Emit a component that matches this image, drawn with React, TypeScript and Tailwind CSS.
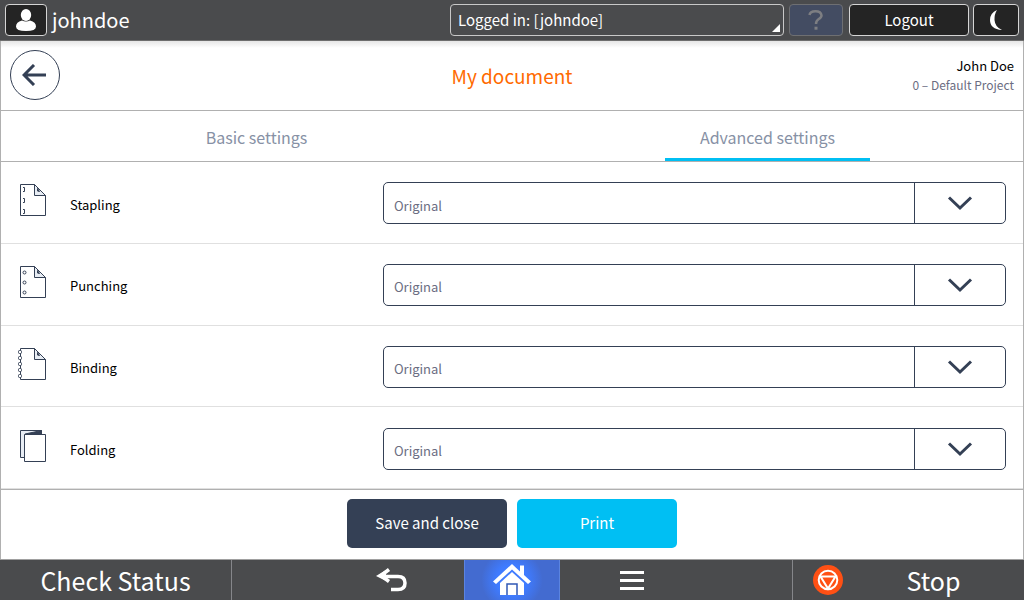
import { useState } from 'react';
import type { ReactNode } from 'react';

const PageOutline = () => (
    <>
        <path d="M3.5 1.5H17.5l11 11V32.5H3.5Z" fill="#fff" />
        <path d="M17.5 1.5V12.5H28.5Z" fill="#e8edf4" />
        <path d="M20.5 5.5v2.500l2 .5z" fill="#344055" />
    </>
);

const StaplingIcon = () => (
    <svg width="32" height="34" viewBox="0 0 32 34" fill="none" stroke="#344055" aria-hidden="true">
        <PageOutline />
        <path d="M6 4.500h1.500v4H6M6 15.500h1.500v4H6M6 26.500h1.500v4H6" strokeLinejoin="round" />
    </svg>
);

const PunchingIcon = () => (
    <svg width="32" height="34" viewBox="0 0 32 34" fill="none" stroke="#344055" aria-hidden="true">
        <PageOutline />
        <circle cx="7.5" cy="7.5" r="1.5" />
        <circle cx="7.5" cy="17.5" r="1.5" />
        <circle cx="7.5" cy="27.5" r="1.5" />
    </svg>
);

const BindingIcon = () => (
    <svg width="32" height="34" viewBox="0 0 32 34" fill="none" stroke="#344055" aria-hidden="true">
        <PageOutline />
        {[3.5, 9.5, 15.5, 21.5, 27.5].map((y) => (
            <rect key={y} x="1.5" y={y} width="3" height="3" rx="1" fill="#fff" />
        ))}
    </svg>
);

const FoldingIcon = () => (
    <svg width="32" height="34" viewBox="0 0 32 34" fill="none" stroke="#344055" aria-hidden="true">
        <path d="M3.5 1.5H24.5V28.5H3.5Z" fill="#e8edf4" />
        <path d="M8 5 24.5 1.5V5.5H8Z" fill="#344055" />
        <path d="M7.5 5.5H28.5V32.5H7.5Z" fill="#fff" />
    </svg>
);

const settings: { id: string; label: string; icon: ReactNode }[] = [
    { id: 'stapling', label: 'Stapling', icon: <StaplingIcon /> },
    { id: 'punching', label: 'Punching', icon: <PunchingIcon /> },
    { id: 'binding', label: 'Binding', icon: <BindingIcon /> },
    { id: 'folding', label: 'Folding', icon: <FoldingIcon /> }
];

const tabs = ['Basic settings', 'Advanced settings'];

const TopBar = () => (
    <header className="flex h-[41px] items-center bg-[#4a4b4d] px-[5px] text-white border-b border-[#6e6e6e]">
        <button aria-label="User" className="flex h-8 w-[42px] items-center justify-center rounded border border-[#d5d5d5] bg-[#242424]">
            <svg width="20" height="22" viewBox="0 0 20 22" fill="#fff" aria-hidden="true">
                <ellipse cx="10" cy="6" rx="5.2" ry="6" />
                <path d="M6 11.5q4 2 8 0 6 1.500 6 6 0 4.500-10 4.500T0 17.500Q0 13 6 11.500Z" />
            </svg>
        </button>
        <span className="ml-[5px] flex-1 text-xl leading-8">johndoe</span>
        <div className="relative mr-[5px] w-[334px]">
            <select aria-label="Session" className="h-8 w-full appearance-none rounded border border-[#c8c8c8] bg-transparent px-[7px] text-[15px] text-white">
                <option>Logged in: [johndoe]</option>
            </select>
            <svg className="pointer-events-none absolute right-1 bottom-1" width="8" height="8" viewBox="0 0 8 8" fill="#fff" aria-hidden="true">
                <path d="M8 0V8H0Z" />
            </svg>
        </div>
        <button aria-label="Help" disabled className="mr-[6px] flex h-8 w-[54px] items-center justify-center rounded border border-[#6e6f72] bg-[#434c62]">
            <svg width="16" height="20" viewBox="0 0 16 20" fill="none" stroke="#7d7e82" strokeWidth="2.500" aria-hidden="true">
                <path d="M1.500 5Q2 1.300 7.500 1.300T13.500 5.500Q13.500 7.500 10.500 9.300 8 11 8 14" />
                <path d="M6.500 18.200H9.500" strokeWidth="3" />
            </svg>
        </button>
        <button className="mr-1 h-8 w-[120px] rounded border border-[#d5d5d5] bg-[#242424] text-[15px]">Logout</button>
        <button aria-label="Sleep" className="flex h-8 w-[46px] items-center justify-center rounded border border-[#d5d5d5] bg-[#242424]">
            <svg width="14" height="20" viewBox="0 0 14 20" fill="#fff" aria-hidden="true">
                <path d="M8 0Q1 3 1 10 1 19 13 20 6 17 5.500 10 5.300 4 8 0Z" />
            </svg>
        </button>
    </header>
);

const TitleBar = () => (
    <div className="grid h-[70px] grid-cols-[1fr_auto_1fr] items-center border-b border-[#b0b0b0] bg-linear-to-b from-[#e6e6e6] via-white via-10% to-white px-[9px] pb-0.5">
        <button aria-label="Back" className="flex size-[50px] items-center justify-center rounded-full border border-[#344055]">
            <svg width="26" height="22" viewBox="0 0 26 22" fill="none" stroke="#344055" strokeWidth="3" aria-hidden="true">
                <path d="M24 11H2M12 1 2 11 12 21" />
            </svg>
        </button>
        <h1 className="pt-1 text-[19px] text-[#ff6a00]">My document</h1>
        <div className="text-right">
            <p className="text-[13px] leading-5 text-black">John Doe</p>
            <p className="text-[12px] leading-[18px] text-[#6b6d82]">0 – Default Project</p>
        </div>
    </div>
);

const SettingRow = ({ id, label, icon }: { id: string; label: string; icon: ReactNode }) => (
    <div className="flex min-h-20 flex-1 items-center border-b border-[#e0e0e0] pt-0.5 pr-[17px] pl-4">
        <div className="-mt-1.5">{icon}</div>
        <label htmlFor={id} className="ml-[21px] flex-1 pt-0.5 text-[13px] text-black">{label}</label>
        <div className="relative w-[63%]">
            <select id={id} className="h-[42px] w-full appearance-none rounded-[5px] border border-[#344055] bg-white px-2.5 pt-1 text-[13px] text-[#6b6d82]">
                <option>Original</option>
            </select>
            <span className="pointer-events-none absolute inset-y-0 right-0 flex w-[92px] items-center justify-center border-l border-[#344055] pr-0.5">
                <svg width="26" height="16" viewBox="0 0 26 16" fill="none" stroke="#344055" strokeWidth="3" aria-hidden="true">
                    <path d="M2 2.500 13 13 24 2.500" />
                </svg>
            </span>
        </div>
    </div>
);

const BottomNav = () => (
    <nav className="flex h-[41px] border-t border-[#a0a0a0] bg-[#4a4b4d] text-white">
        <button className="w-[232px] border-r border-[#85868a] text-[25px] leading-10">Check Status</button>
        <div className="flex flex-1 justify-center gap-6">
            <button aria-label="Back" className="flex w-24 items-center justify-center">
                <svg width="32" height="24" viewBox="0 0 32 24" fill="none" stroke="#fff" strokeWidth="3.500" aria-hidden="true">
                    <path d="M8 8.500H22Q29 8.500 29 15T22 21.500H15" />
                    <path d="M13 1.500 5 7.500 13 13.500" />
                    <path d="M0 8 10 2V13Z" fill="#fff" stroke="none" />
                </svg>
            </button>
            <button aria-label="Home" className="flex w-24 items-center justify-center border-x border-[#5b84e0] bg-radial-[circle] from-[#3f7bff] from-30% to-[#436bd0] to-60%">
                <svg width="38" height="32" viewBox="0 0 38 32" fill="#fff" aria-hidden="true">
                    <path d="M19 0 27 7.500V1.500H31V11L38 17.500 35 20 19 5.500 3 20 0 17.500Z" />
                    <path d="M19 8 31 19V31H7V19Z" />
                    <path d="M14 31V20H24V31" fill="none" stroke="#3158b5" strokeWidth="1.500" />
                </svg>
            </button>
            <button aria-label="Menu" className="flex w-24 items-center justify-center">
                <svg width="24" height="20" viewBox="0 0 24 20" fill="#fff" aria-hidden="true">
                    <path d="M0 1H24V4H0ZM0 9H24V12H0ZM0 17H24V20H0Z" />
                </svg>
            </button>
        </div>
        <button className="flex w-[232px] items-center border-l border-[#85868a] pl-5 text-[25px] leading-10">
            <svg width="30" height="30" viewBox="0 0 30 30" fill="none" stroke="#fff" strokeWidth="2" aria-hidden="true">
                <circle cx="15" cy="15" r="15" fill="#ff5014" stroke="none" />
                <circle cx="15" cy="15" r="9.300" />
                <path d="M7.500 11.500H22.500L15 23.500Z" />
            </svg>
            <span className="flex-1 text-center">Stop</span>
        </button>
    </nav>
);

export default function App() {
    const [activeTab, setActiveTab] = useState(1);

    return (
        <div className="flex min-h-screen flex-col bg-white font-['Noto_Sans_CJK_JP','Noto_Sans',sans-serif]">
            <TopBar />
            <main className="flex flex-1 flex-col border-x border-[#b0b0b0]">
                <TitleBar />
                <div role="tablist" className="grid h-[51px] grid-cols-2 border-b border-[#b0b0b0]">
                    {tabs.map((tab, idx) => (
                        <button key={tab} role="tab" aria-selected={idx === activeTab} onClick={() => setActiveTab(idx)} className="flex justify-center text-base text-[#8791a5]">
                            <span className={`flex h-full w-2/5 items-center justify-center border-b-[3px] pt-1 ${idx === activeTab ? 'border-[#00bff3]' : 'border-transparent'}`}>
                                {tab}
                            </span>
                        </button>
                    ))}
                </div>
                <div className="flex flex-1 flex-col">
                    {settings.map((setting) => (
                        <SettingRow key={setting.id} {...setting} />
                    ))}
                </div>
                <div className="flex h-[70px] items-center justify-center gap-2.5 border-t border-[#b0b0b0] pb-0.5 text-[15px] text-white">
                    <button className="h-[49px] w-40 rounded-[5px] bg-[#344055]">Save and close</button>
                    <button className="h-[49px] w-40 rounded-[5px] bg-[#00bff3]">Print</button>
                </div>
            </main>
            <BottomNav />
        </div>
    );
}
